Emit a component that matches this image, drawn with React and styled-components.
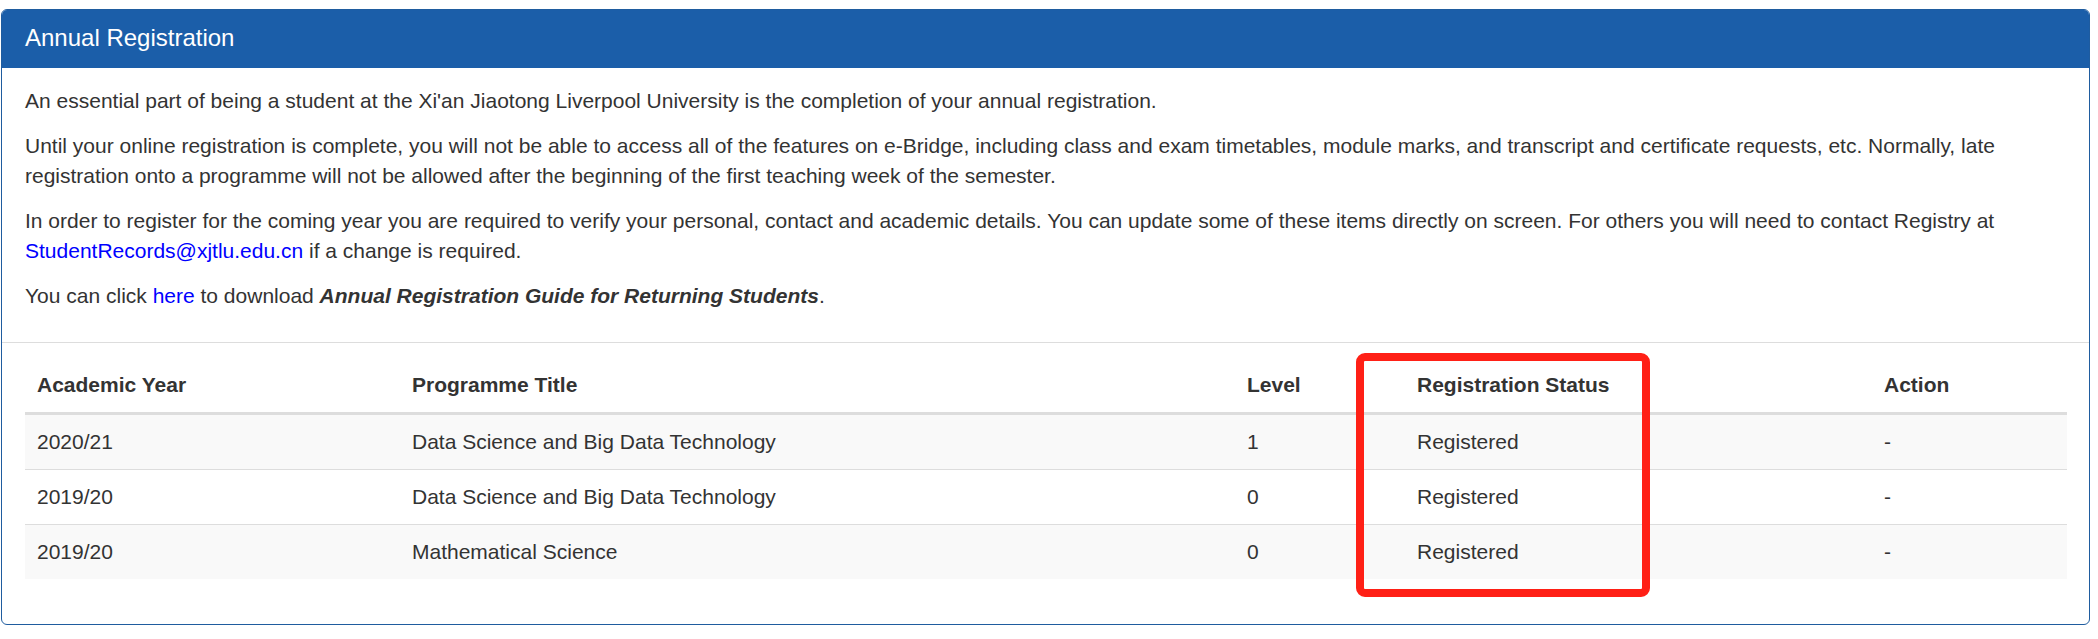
import React from 'react'
import styled, {createGlobalStyle} from 'styled-components'

const GlobalStyle = createGlobalStyle`
    * {
        box-sizing: border-box;
    }
    body {
        margin: 0;
        background: #fff;
        color: #333;
        font-family: 'Liberation Sans', Arial, Helvetica, sans-serif;
    }
`

const Panel = styled.div`
    margin: 9px 8px 0 1px;
    border: 1px solid #1f5c9f;
    border-radius: 6px;
    background: #fff;
`

const PanelHeading = styled.div`
    padding: 15px 23px 16px;
    background: #1b5ea9;
    border-bottom: 1px solid #1b5ea9;
    border-radius: 5px 5px 0 0;
    color: #fff;
`

const PanelTitle = styled.h3`
    margin: 0;
    font-size: 24px;
    font-weight: normal;
    line-height: 1.1;
`

const PanelBody = styled.div`
    padding: 18px 22px 16px 23px;
    font-size: 21px;
    line-height: 30px;
`

const Paragraph = styled.p`
    margin: 0 0 15px;
`

const Link = styled.a`
    color: #0000ff;
    text-decoration: none;
`

const GuideTitle = styled.strong`
    font-style: italic;
`

const TableSection = styled.div`
    position: relative;
    padding: 15px 22px 45px 23px;
    border-top: 1px solid #ddd;
`

const Table = styled.table`
    width: 100%;
    border-collapse: collapse;
    table-layout: fixed;
    font-size: 21px;
    line-height: 30px;
`

const HeadCell = styled.th`
    width: ${props => props.$width}px;
    padding: 12px;
    text-align: left;
    vertical-align: bottom;
    font-weight: bold;
    border-bottom: 3px solid #ddd;
`

const Row = styled.tr`
    &:nth-of-type(odd) {
        background: #f9f9f9;
    }
`

const Cell = styled.td`
    padding: 12px;
    border-top: 1px solid #ddd;
`

const Highlight = styled.div`
    position: absolute;
    top: 10px;
    left: 1354px;
    width: 294px;
    height: 244px;
    border: 8px solid #ff2016;
    border-radius: 9px;
    pointer-events: none;
`

const columns = [
    {label: 'Academic Year', width: 375},
    {label: 'Programme Title', width: 835},
    {label: 'Level', width: 170},
    {label: 'Registration Status', width: 467},
    {label: 'Action', width: 195},
]

const registrations = [
    {year: '2020/21', title: 'Data Science and Big Data Technology', level: '1', status: 'Registered'},
    {year: '2019/20', title: 'Data Science and Big Data Technology', level: '0', status: 'Registered'},
    {year: '2019/20', title: 'Mathematical Science', level: '0', status: 'Registered'},
]

const App = () => (
    <>
        <GlobalStyle />
        <Panel>
            <PanelHeading>
                <PanelTitle>Annual Registration</PanelTitle>
            </PanelHeading>
            <PanelBody>
                <Paragraph>
                    An essential part of being a student at the Xi'an Jiaotong Liverpool University is the
                    completion of your annual registration.
                </Paragraph>
                <Paragraph>
                    Until your online registration is complete, you will not be able to access all of the
                    features on e-Bridge, including class and exam timetables, module marks, and transcript and
                    certificate requests, etc. Normally, late registration onto a programme will not be allowed
                    after the beginning of the first teaching week of the semester.
                </Paragraph>
                <Paragraph>
                    In order to register for the coming year you are required to verify your personal, contact
                    and academic details. You can update some of these items directly on screen. For others you
                    will need to contact Registry at{' '}
                    <Link href="#">StudentRecords@xjtlu.edu.cn</Link> if a change is required.
                </Paragraph>
                <Paragraph>
                    You can click <Link href="#">here</Link> to download{' '}
                    <GuideTitle>Annual Registration Guide for Returning Students</GuideTitle>.
                </Paragraph>
            </PanelBody>
            <TableSection>
                <Table>
                    <thead>
                        <tr>
                            {columns.map(col => (
                                <HeadCell key={col.label} $width={col.width}>
                                    {col.label}
                                </HeadCell>
                            ))}
                        </tr>
                    </thead>
                    <tbody>
                        {registrations.map((r, i) => (
                            <Row key={i}>
                                <Cell>{r.year}</Cell>
                                <Cell>{r.title}</Cell>
                                <Cell>{r.level}</Cell>
                                <Cell>{r.status}</Cell>
                                <Cell>-</Cell>
                            </Row>
                        ))}
                    </tbody>
                </Table>
                <Highlight />
            </TableSection>
        </Panel>
    </>
)

export default App
